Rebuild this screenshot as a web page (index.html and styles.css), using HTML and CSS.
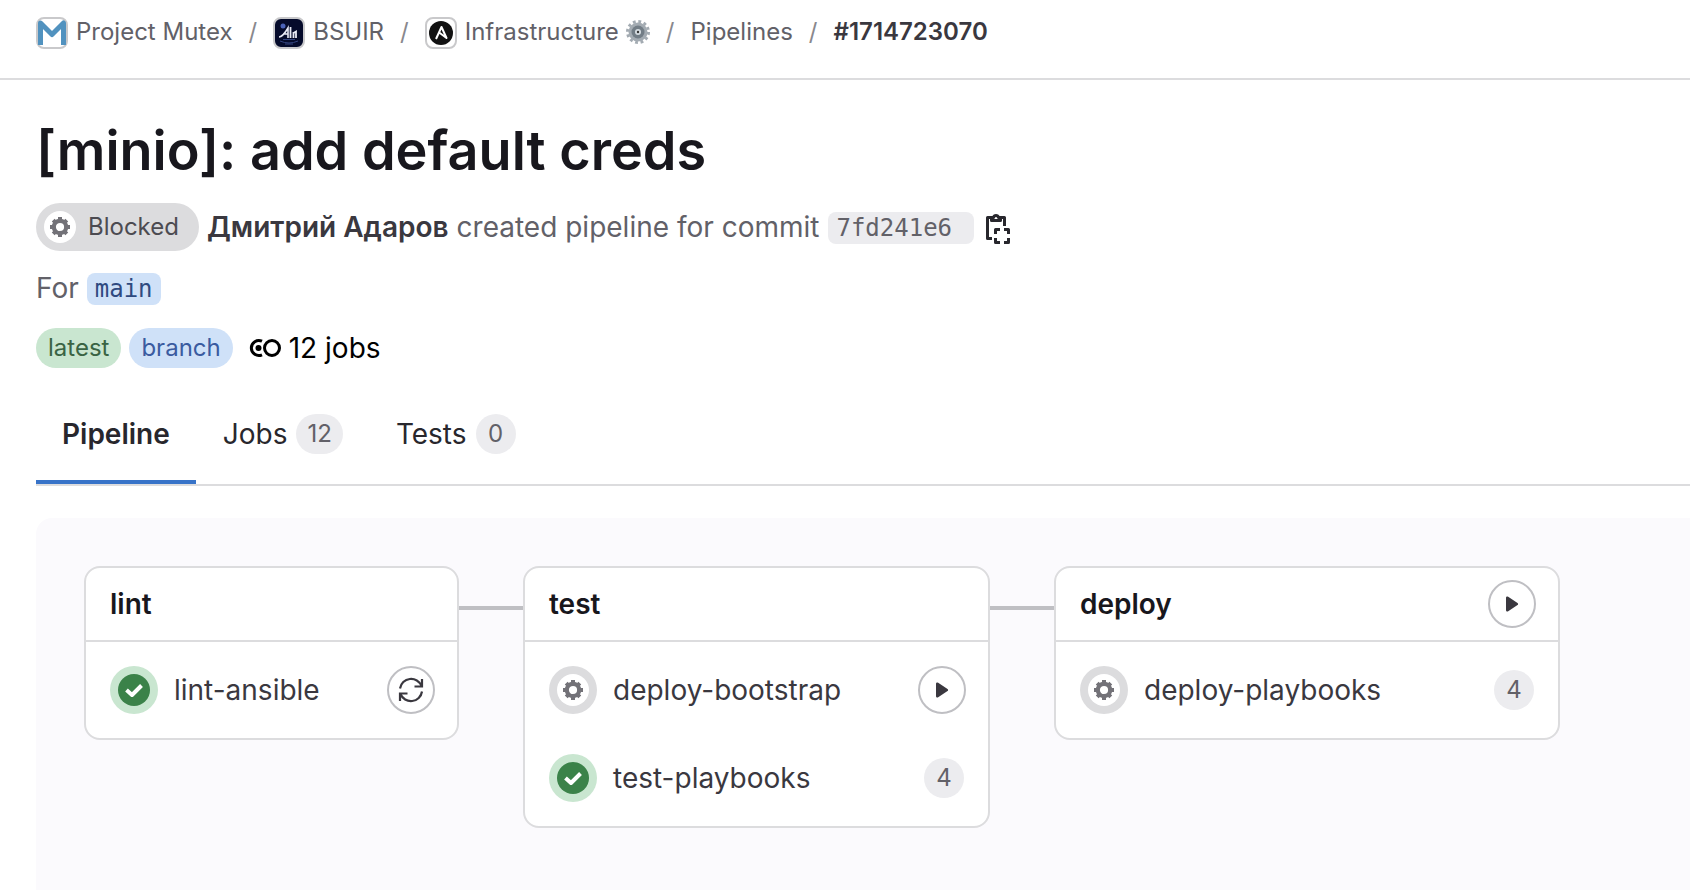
FILE: index.html
```html
<!DOCTYPE html>
<html lang="en">
<head>
<meta charset="utf-8">
<title>[minio]: add default creds · Pipeline #1714723070</title>
<link rel="stylesheet" href="styles.css">
</head>
<body>
<svg class="sprite" aria-hidden="true">
  <symbol id="gear" viewBox="0 0 20 20">
    <g fill="none" stroke="currentColor">
      <circle cx="10" cy="10" r="6.200" stroke-width="4.200"/>
      <path d="M10 0v4M10 16v4M0 10h4M16 10h4M3.200 3.200l2.800 2.800M14 14l2.800 2.800M3.200 16.800l2.800-2.800M14 6l2.800-2.800" stroke-width="4"/>
    </g>
  </symbol>
  <symbol id="manual" viewBox="0 0 32 32">
    <circle cx="16" cy="16" r="16" fill="#fff"/>
    <use href="#gear" x="6" y="6" width="20" height="20"/>
  </symbol>
  <symbol id="success" viewBox="0 0 32 32">
    <circle cx="16" cy="16" r="16"/>
    <path d="M8.500 16l5.500 5L23.500 11.500" fill="none" stroke="#fff" stroke-width="4" stroke-linejoin="round"/>
  </symbol>
  <symbol id="play" viewBox="0 0 32 32">
    <path d="M10 9.800v12.400a1.400 1.400 0 0 0 2.200 1.100l9.300-6.200a1.300 1.300 0 0 0 0-2.200l-9.300-6.200A1.400 1.400 0 0 0 10 9.800z"/>
  </symbol>
</svg>

<header class="topbar">
  <nav aria-label="Breadcrumbs">
    <ol class="crumbs">
      <li><a href="#"><svg class="avatar" viewBox="0 0 32 32" aria-hidden="true"><rect x="1" y="1" width="30" height="30" rx="7" fill="#fff" stroke="#c9c9cb" stroke-width="2"/><path d="M4.500 28V6L16 17.500 27.500 6v22" fill="none" stroke="#5192bf" stroke-width="5" stroke-linejoin="round"/></svg>Project Mutex</a></li>
      <li><a href="#"><svg class="avatar" viewBox="0 0 32 32" aria-hidden="true"><rect x="1" y="1" width="30" height="30" rx="7" fill="#050b2b" stroke="#c9c9cb" stroke-width="2"/><circle cx="10" cy="9" r="2.500" fill="#4a62b8"/><path d="M6 20c3 0 6-4 9-9v10M10 17h5" fill="none" stroke="#e8eaf5" stroke-width="1.600"/><path d="M17.500 10v11M20.500 21v-6M20.500 16l2.500-1.500V21" fill="none" stroke="#e8eaf5" stroke-width="1.800"/><path d="M7 24q9 4 18 0M10 22.500h12M12 27h8" fill="none" stroke="#34457f"/></svg>BSUIR</a></li>
      <li><a href="#"><svg class="avatar" viewBox="0 0 32 32" aria-hidden="true"><rect x="1" y="1" width="30" height="30" rx="7" fill="#fff" stroke="#c9c9cb" stroke-width="2"/><circle cx="16" cy="16" r="12" fill="#121212"/><path d="M11 22l5.500-12 5 11-8-6" fill="none" stroke="#fff" stroke-width="2" stroke-linejoin="round"/></svg>Infrastructure <svg class="emoji" viewBox="0 0 24 24" aria-hidden="true"><circle cx="12" cy="12" r="10.500" fill="none" stroke="#a3abb2" stroke-width="3" stroke-dasharray="2.800 2.700"/><circle cx="12" cy="12" r="9.500" fill="#a3abb2"/><circle cx="12" cy="12" r="6.500" fill="#727d86"/><circle cx="12" cy="12" r="3" fill="#d5dce1"/><circle cx="12" cy="12" r="1.200" fill="#333"/></svg></a></li>
      <li><a href="#">Pipelines</a></li>
      <li><a href="#" class="current" aria-current="page">#1714723070</a></li>
    </ol>
  </nav>
</header>

<main class="page">
  <h1 class="title">[minio]: add default creds</h1>

  <div class="meta">
    <span class="status"><svg class="icon" aria-hidden="true"><use href="#manual"/></svg>Blocked</span>
    <a href="#" class="author">Дмитрий Адаров</a>
    <span>created pipeline for commit</span>
    <a href="#" class="code commit">7fd241e6</a>
    <button class="copy" type="button" aria-label="Copy commit SHA"><svg class="icon" viewBox="0 0 32 32" aria-hidden="true"><g fill="none" stroke="currentColor" stroke-width="3" stroke-linejoin="round"><path d="M10 5.500H5.500v21H10"/><path d="M18 5.500h4.500V14"/><path d="M9.500 8.500v-3h2a2.600 2.600 0 0 1 5 0h2v3z"/><path d="M13.500 22v-4.500H18M22 17.500h4.500V22M26.500 26v4.500H22M18 30.500h-4.500V26"/></g></svg></button>
  </div>

  <div class="ref">For <a href="#" class="code branch-name">main</a></div>

  <div class="badges">
    <span class="badge green">latest</span>
    <span class="badge blue">branch</span>
    <span class="jobs"><svg class="icon" viewBox="0 0 32 32" aria-hidden="true"><g fill="none" stroke="currentColor" stroke-width="3"><circle cx="23" cy="16" r="7.500"/><path d="M13 9.200A7.500 7.500 0 1 0 13 22.800"/></g><circle cx="9.500" cy="16" r="3" fill="currentColor"/></svg>12 jobs</span>
  </div>

  <nav class="tabs" aria-label="Pipeline views">
    <a href="#" class="tab active" aria-current="page">Pipeline</a>
    <a href="#" class="tab">Jobs <span class="count">12</span></a>
    <a href="#" class="tab">Tests <span class="count">0</span></a>
  </nav>

  <section class="graph" aria-label="Pipeline graph">
    <article class="stage lint">
      <header class="stage-head"><h2>lint</h2></header>
      <ul class="stage-jobs">
        <li><span class="ring ok"><svg class="icon" aria-hidden="true"><use href="#success"/></svg></span><a href="#">lint-ansible</a><button class="action" type="button" aria-label="Retry"><svg class="icon" viewBox="0 0 32 32" aria-hidden="true"><g fill="none" stroke="currentColor" stroke-width="2.200"><path d="M5 14.500A11.200 11.200 0 0 1 26.500 12"/><path d="M27 5v7.500h-7.500"/><path d="M27 17.500A11.200 11.200 0 0 1 5.500 20"/><path d="M5 27v-7.500h7.500"/></g></svg></button></li>
      </ul>
    </article>
    <article class="stage test">
      <header class="stage-head"><h2>test</h2></header>
      <ul class="stage-jobs">
        <li><span class="ring"><svg class="icon" aria-hidden="true"><use href="#manual"/></svg></span><a href="#">deploy-bootstrap</a><button class="action" type="button" aria-label="Run"><svg class="icon" aria-hidden="true"><use href="#play"/></svg></button></li>
        <li><span class="ring ok"><svg class="icon" aria-hidden="true"><use href="#success"/></svg></span><a href="#">test-playbooks</a><span class="count">4</span></li>
      </ul>
    </article>
    <article class="stage deploy">
      <header class="stage-head"><h2>deploy</h2><button class="action" type="button" aria-label="Run all"><svg class="icon" aria-hidden="true"><use href="#play"/></svg></button></header>
      <ul class="stage-jobs">
        <li><span class="ring"><svg class="icon" aria-hidden="true"><use href="#manual"/></svg></span><a href="#">deploy-playbooks</a><span class="count">4</span></li>
      </ul>
    </article>
  </section>
</main>
</body>
</html>
```
FILE: styles.css
```css
* { box-sizing: border-box; }

body {
  margin: 0;
  min-height: 100vh;
  display: flex;
  flex-direction: column;
  background: #fff;
  color: #626168;
  font: 28px/40px Inter, "Noto Sans", sans-serif;
}

a { color: inherit; text-decoration: none; }
ol, ul { margin: 0; padding: 0; list-style: none; }
h1, h2 { margin: 0; }
button { padding: 0; font: inherit; cursor: pointer; }
.sprite { position: absolute; width: 0; height: 0; }
.icon { display: block; flex: none; width: 32px; height: 32px; fill: currentColor; }

.topbar {
  padding: 12px 36px 26px;
  border-bottom: 2px solid #dcdcde;
}

.crumbs { display: flex; font-size: 24px; }
.crumbs li { display: flex; }
.crumbs li + li::before { content: "/"; margin: 0 16px; color: #89888d; }
.crumbs a { display: flex; align-items: center; }
.avatar { width: 32px; height: 32px; margin: 2px 8px 0 0; }
.emoji { width: 24px; height: 24px; margin-left: 7px; }
.crumbs .current { color: #3a383f; font-weight: 600; }

.page {
  flex: 1;
  display: flex;
  flex-direction: column;
  padding: 35px 0 0 36px;
}

.title {
  color: #18171d;
  font-size: 54px;
  line-height: 72px;
  font-weight: 600;
}

.meta { display: flex; align-items: center; gap: 8px; margin-top: 16px; }

.status {
  display: flex;
  align-items: center;
  gap: 12px;
  height: 48px;
  padding: 0 20px 0 8px;
  border-radius: 24px;
  background: #dcdcde;
  color: #4c4b51;
  font-size: 24px;
}
.status .icon { color: #737278; }

.author { color: #3a383f; font-weight: 600; }

.code {
  margin-top: 2px;
  padding: 0 8px;
  border-radius: 8px;
  font: 24px/32px "DejaVu Sans Mono", monospace;
}
.commit { width: 146px; margin-left: 1px; background: #ececef; }
.copy { display: flex; margin-top: 2px; border: 0; background: none; color: #28272d; }

.ref { display: flex; align-items: center; gap: 8px; margin-top: 17px; }
.branch-name { background: #cfe1f8; color: #2f4a80; }

.badges { display: flex; align-items: center; gap: 8px; margin-top: 20px; }
.badge { padding: 0 12px; border-radius: 20px; font-size: 24px; }
.green { background: #c9e6d0; color: #3a6444; }
.blue { background: #cfe1f8; color: #3a5ba0; }
.jobs { display: flex; align-items: center; gap: 8px; margin-left: 8px; color: #000; }

.tabs { display: flex; gap: 1px; margin-top: 22px; border-bottom: 2px solid #dcdcde; }
.tab {
  display: flex;
  gap: 9px;
  padding: 24px 26px 26px;
  border-bottom: 4px solid transparent;
  color: #28272d;
}
.active { border-color: #3773c8; font-weight: 600; }

.count {
  min-width: 40px;
  padding: 0 11px;
  border-radius: 20px;
  background: #ececef;
  color: #626168;
  font-size: 24px;
  text-align: center;
}

.graph {
  flex: 1;
  display: flex;
  align-items: flex-start;
  gap: 64px;
  margin-top: 32px;
  padding: 48px;
  border-radius: 16px 0 0 0;
  background: #fbfafd;
}

.stage {
  position: relative;
  border: 2px solid #dcdcde;
  border-radius: 16px;
  background: #fff;
}
.stage + .stage::before {
  content: "";
  position: absolute;
  top: 38px;
  right: 100%;
  width: 64px;
  height: 4px;
  margin-right: 2px;
  background: #bfbfc3;
}
.lint { flex: 0 1 375px; }
.test { flex: 0 1 467px; }
.deploy { flex: 0 1 506px; }

.stage-head {
  display: flex;
  align-items: center;
  justify-content: space-between;
  height: 74px;
  padding: 0 22px 0 24px;
  border-bottom: 2px solid #dcdcde;
}
.stage-head h2 { color: #18171d; font-size: 28px; font-weight: 600; }

.stage-jobs { display: grid; gap: 40px; padding: 24px 22px 24px 24px; }
.stage-jobs li { display: flex; align-items: center; height: 48px; }
.stage-jobs a { flex: 1; margin-left: 16px; color: #3a383f; white-space: nowrap; }
.stage-jobs .count { margin-right: 2px; }

.ring { padding: 8px; border-radius: 50%; background: #dcdcde; color: #737278; }
.ok { background: #c9e6d0; color: #3b8249; }

.action {
  display: grid;
  place-items: center;
  width: 48px;
  height: 48px;
  border: 2px solid #bfbfc3;
  border-radius: 50%;
  background: #fff;
  color: #3a383f;
}
```
